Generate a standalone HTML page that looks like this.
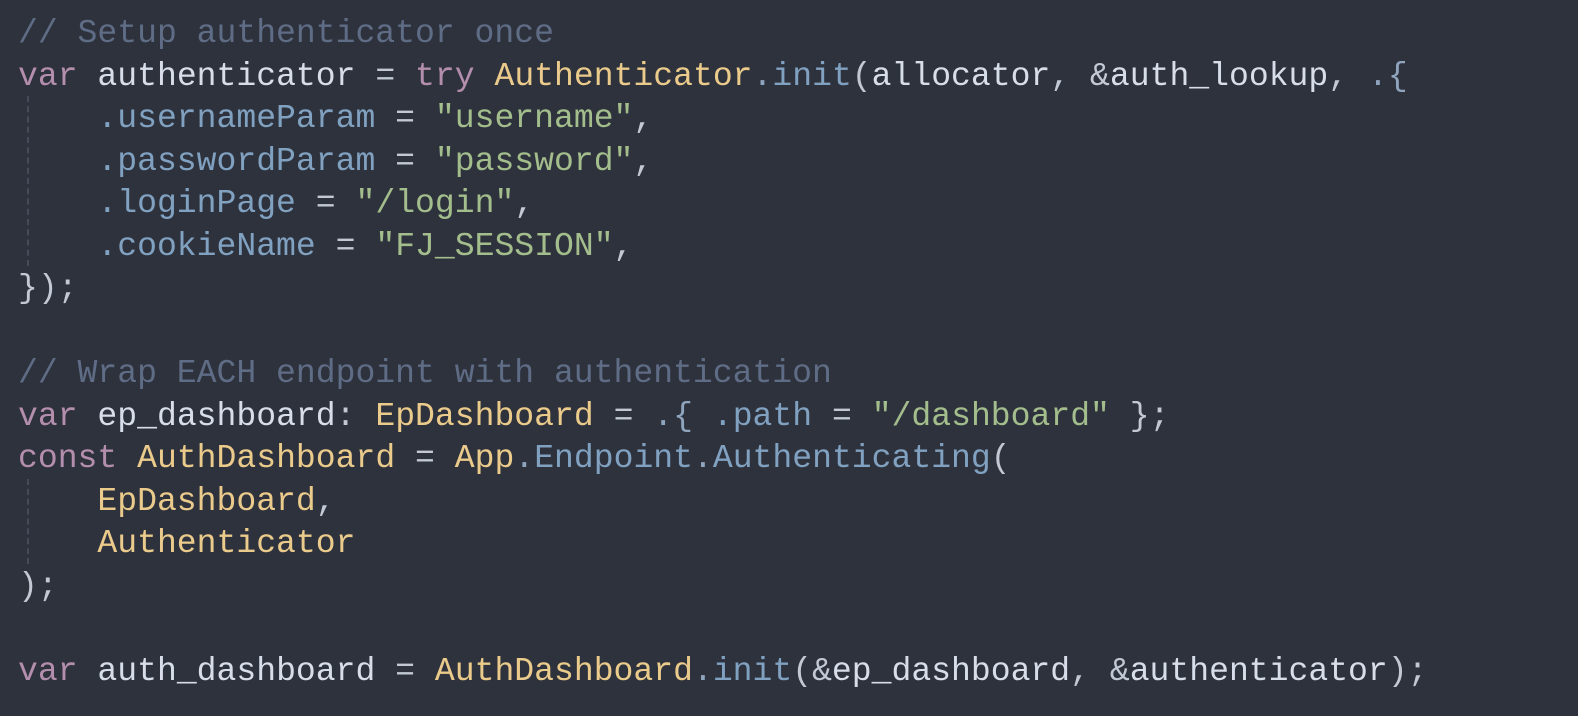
<!DOCTYPE html>
<html><head><style>
html,body{margin:0;padding:0;background:#2e323d;width:1578px;height:716px;overflow:hidden}
pre{margin:0;position:absolute;left:18px;top:12px;font-family:"Liberation Mono",monospace;font-size:33.1px;line-height:42.53px;color:#d8dee9;letter-spacing:0}
.c{color:#5f6c85}.k{color:#b48ead}.t{color:#ebcb8b}.f{color:#81a1c1}.s{color:#a3be8c}.p{color:#d8dee9}.o{color:#c3c9d4}.b{color:#8fa4bd}
.g{position:absolute;left:27px;border-left:2px dashed #454b58;width:0}
</style></head><body>
<div class="g" style="top:96px;height:170px"></div>
<div class="g" style="top:479px;height:85px"></div>
<pre><span class="c">// Setup authenticator once</span>
<span class="k">var</span> authenticator <span class="o">=</span> <span class="k">try</span> <span class="t">Authenticator</span><span class="b">.</span><span class="f">init</span><span class="o">(</span>allocator<span class="o">,</span> <span class="o">&amp;</span>auth_lookup<span class="o">,</span> <span class="b">.{</span>
    <span class="f">.usernameParam</span> <span class="o">=</span> <span class="s">"username"</span><span class="o">,</span>
    <span class="f">.passwordParam</span> <span class="o">=</span> <span class="s">"password"</span><span class="o">,</span>
    <span class="f">.loginPage</span> <span class="o">=</span> <span class="s">"/login"</span><span class="o">,</span>
    <span class="f">.cookieName</span> <span class="o">=</span> <span class="s">"FJ_SESSION"</span><span class="o">,</span>
<span class="o">});</span>

<span class="c">// Wrap EACH endpoint with authentication</span>
<span class="k">var</span> ep_dashboard<span class="o">:</span> <span class="t">EpDashboard</span> <span class="o">=</span> <span class="b">.{</span> <span class="f">.path</span> <span class="o">=</span> <span class="s">"/dashboard"</span> <span class="o">};</span>
<span class="k">const</span> <span class="t">AuthDashboard</span> <span class="o">=</span> <span class="t">App</span><span class="b">.</span><span class="f">Endpoint</span><span class="b">.</span><span class="f">Authenticating</span><span class="o">(</span>
    <span class="t">EpDashboard</span><span class="o">,</span>
    <span class="t">Authenticator</span>
<span class="o">);</span>

<span class="k">var</span> auth_dashboard <span class="o">=</span> <span class="t">AuthDashboard</span><span class="b">.</span><span class="f">init</span><span class="o">(&amp;</span>ep_dashboard<span class="o">, &amp;</span>authenticator<span class="o">);</span></pre>
</body></html>
